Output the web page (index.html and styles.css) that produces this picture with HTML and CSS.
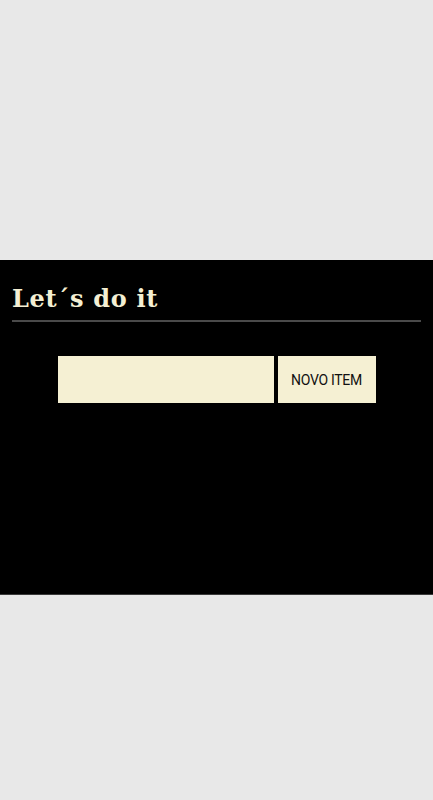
FILE: index.html
```html
<!DOCTYPE html>
<html lang="pt">
<head>
<meta charset="utf-8">
<title>Let´s do it</title>
<link rel="stylesheet" href="styles.css">
</head>
<body>
<main class="panel">
  <header class="header">
    <h1 class="title">Let´s do it</h1>
  </header>
  <form class="form">
    <input class="field" type="text">
    <button class="btn" type="button">NOVO ITEM</button>
  </form>
</main>
</body>
</html>
```
FILE: styles.css
```css
html, body {
  margin: 0;
  padding: 0;
  background: #e8e8e8;
}
body {
  padding-top: 260px;
}
.panel {
  background: #000;
  height: 335px;
  padding: 0 12px;
  box-sizing: border-box;
  border-bottom: 1px solid #3a3a3a;
  overflow: hidden;
}
.header {
  padding-top: 24px;
  border-bottom: 2px solid #4a4a4a;
}
.title {
  margin: 0;
  height: 36px;
  font-family: "DejaVu Serif", serif;
  font-weight: bold;
  font-size: 24px;
  line-height: 30px;
  color: #f4efd3;
  letter-spacing: 0.7px;
}
.form {
  display: flex;
  justify-content: center;
  gap: 4px;
  margin-top: 34px;
}
.field {
  width: 216px;
  height: 47px;
  box-sizing: border-box;
  border: none;
  margin: 0;
  background: #f5f0d3;
  outline: none;
}
.btn {
  width: 98px;
  height: 47px;
  border: none;
  margin: 0;
  padding: 0;
  background: #f5f0d3;
  color: #111;
  font-family: Roboto, sans-serif;
  font-size: 14px;
  letter-spacing: -0.3px;
}
```
